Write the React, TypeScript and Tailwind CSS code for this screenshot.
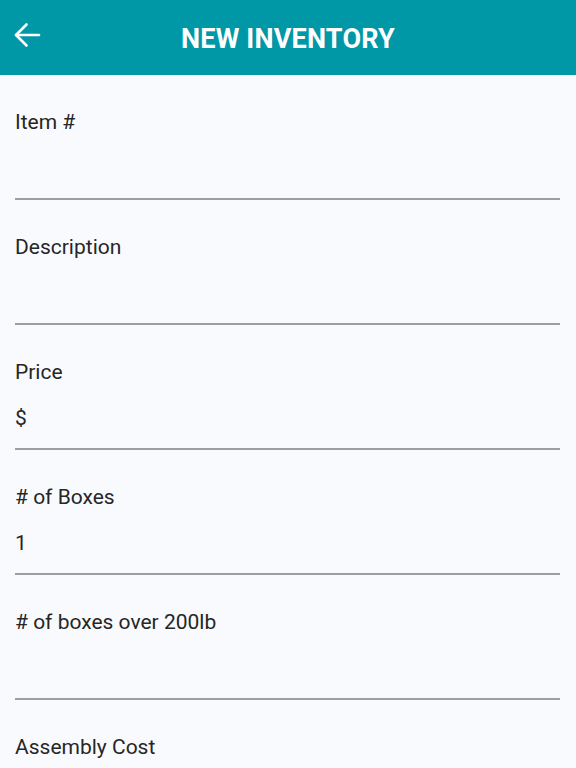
const fields = [
  { label: "Item #", value: "" },
  { label: "Description", value: "" },
  { label: "Price", value: "$" },
  { label: "# of Boxes", value: "1" },
  { label: "# of boxes over 200lb", value: "" },
  { label: "Assembly Cost", value: "" },
];

function Field({ label, value }: { label: string; value: string }) {
  return (
    <div className="px-[15px] pt-[35px]">
      <div className="h-6 text-[21px] leading-6 text-[#262626]">{label}</div>
      <div className="mt-[22px] h-6 text-[21px] leading-6 text-[#262626]">{value}</div>
      <div className="mt-[18px] h-[2px] bg-[#9e9e9e]" />
    </div>
  );
}

export default function App() {
  return (
    <div className="min-h-screen bg-[#f9fafd] font-['Roboto',sans-serif]">
      <header className="h-[75px] bg-[#0097a7] flex items-center relative">
        <button className="absolute left-[12px] top-[20px] w-[30px] h-[30px] flex items-center justify-center">
          <svg width="28" height="26" viewBox="0 0 28 26" fill="none" stroke="white" strokeWidth="2.6" strokeLinecap="round" strokeLinejoin="round">
            <path d="M26 13H3" />
            <path d="M13.5 2.5 3 13l10.5 10.5" />
          </svg>
        </button>
        <h1 className="w-full pt-[4px] text-center text-white font-bold text-[27px] leading-none tracking-[0.2px]">NEW INVENTORY</h1>
      </header>
      <main className="pr-[1px]">
        {fields.map((f) => (
          <Field key={f.label} label={f.label} value={f.value} />
        ))}
      </main>
    </div>
  );
}
